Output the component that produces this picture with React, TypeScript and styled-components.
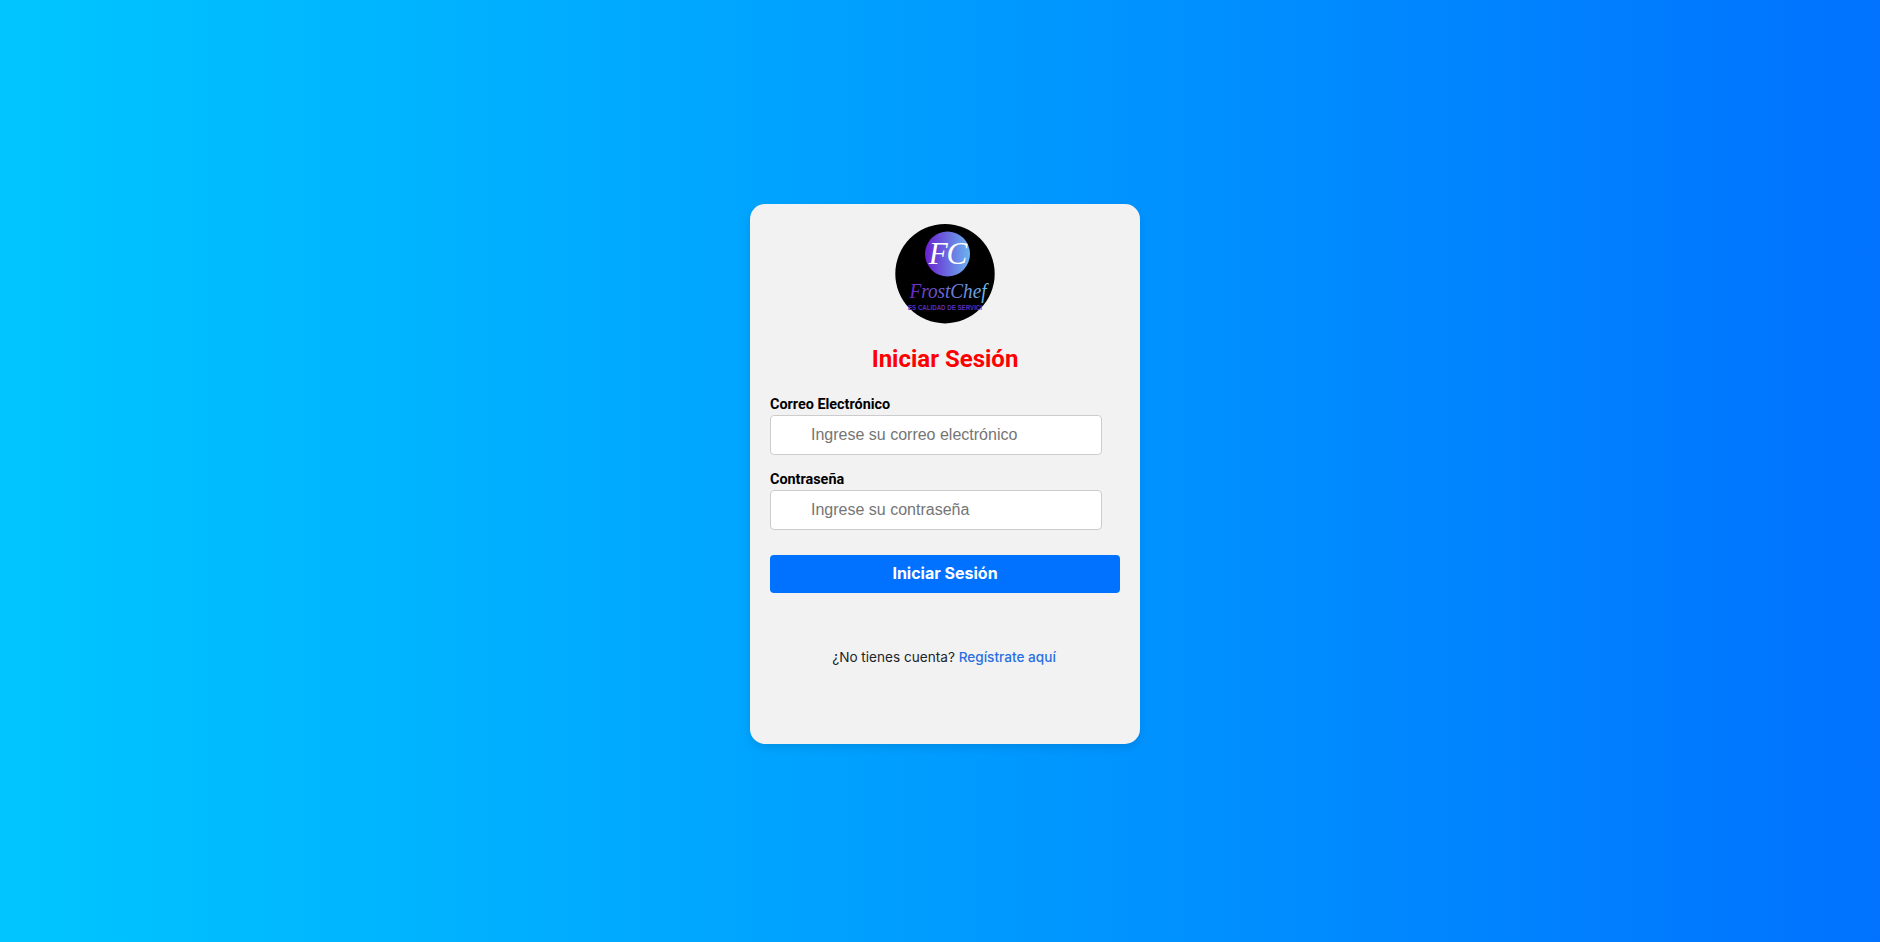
import React from "react";
import styled, { createGlobalStyle } from "styled-components";

const Global = createGlobalStyle`
  html, body { margin: 0; padding: 0; height: 100%; }
  * { box-sizing: border-box; }
  body { font-family: Roboto, "Liberation Sans", sans-serif; }
`;

const Page = styled.main`
  height: 942px;
  display: flex;
  align-items: center;
  justify-content: center;
  padding-left: 10px;
  background: linear-gradient(90deg, #00c6ff 0%, #0072ff 100%);
`;

const Card = styled.section`
  width: 390px;
  height: 540px;
  padding: 20px;
  margin-top: 6px;
  display: flex;
  flex-direction: column;
  background: #f2f2f2;
  border-radius: 15px;
  box-shadow: 0 4px 10px rgba(0, 0, 0, 0.1);
`;

const LogoWrap = styled.div`
  display: flex;
  justify-content: center;
  height: 100px;
`;

const Title = styled.h2`
  margin: 20px 0 0;
  height: 30px;
  font-size: 24px;
  line-height: 30px;
  font-weight: 700;
  color: #f00;
  text-align: center;
`;

const Form = styled.form`
  display: flex;
  flex-direction: column;
  margin-top: 22px;
`;

const Field = styled.div`
  display: flex;
  flex-direction: column;
  margin-bottom: 16px;
`;

const Label = styled.label`
  font-size: 14.4px;
  line-height: 17px;
  font-weight: 700;
  color: #000;
  margin-bottom: 2px;
`;

const Input = styled.input`
  width: 332px;
  height: 40px;
  padding: 0 10px 0 40px;
  font-family: "Liberation Sans", Arial, sans-serif;
  font-size: 16px;
  color: #222;
  background: #fff;
  border: 1px solid #ccc;
  border-radius: 4px;
  outline: none;
  &::placeholder { color: #757575; opacity: 1; }
`;

const Submit = styled.button`
  width: 350px;
  height: 38px;
  margin-top: 9px;
  padding: 0 0 2px;
  font-family: Inter, Roboto, sans-serif;
  font-size: 16px;
  font-weight: 700;
  color: #fff;
  background: #0072ff;
  border: none;
  border-radius: 4px;
`;

const Footer = styled.p`
  margin: 56px 0 0;
  padding-right: 2px;
  font-family: Inter, Roboto, sans-serif;
  font-size: 13.6px;
  line-height: 17px;
  color: #212529;
  text-align: center;
`;

const FooterLink = styled.a`
  color: #2a6fe0;
  font-weight: 500;
  text-decoration: none;
`;

const Logo = () => (
  <svg width="100" height="100" viewBox="0 0 100 100" role="img" aria-label="FrostChef">
    <defs>
      <linearGradient id="disc" x1="0" x2="1" y1="0" y2="0">
        <stop offset="0" stopColor="#6a1fd0" />
        <stop offset="1" stopColor="#6bb5f0" />
      </linearGradient>
      <linearGradient id="brand" x1="0" x2="1" y1="0" y2="0">
        <stop offset="0" stopColor="#6a22c8" />
        <stop offset="1" stopColor="#6cc0ee" />
      </linearGradient>
    </defs>
    <circle cx="50" cy="49.7" r="49.7" fill="#000" />
    <circle cx="52.5" cy="30" r="22.5" fill="url(#disc)" />
    <text x="52.5" y="40" textAnchor="middle" fontFamily="'Liberation Serif', serif" fontStyle="italic" fontSize="31" letterSpacing="-1" fill="#fff">
      FC
    </text>
    <text x="53" y="74" textAnchor="middle" fontFamily="'Liberation Serif', serif" fontStyle="italic" fontSize="20" textLength="77" lengthAdjust="spacingAndGlyphs" fill="url(#brand)">
      FrostChef
    </text>
    <text x="50" y="86" textAnchor="middle" fontFamily="'Liberation Sans', sans-serif" fontWeight="700" fontSize="6.5" textLength="74" lengthAdjust="spacingAndGlyphs" fill="#5a2fb8">
      ES CALIDAD DE SERVICI
    </text>
  </svg>
);

export default function App() {
  return (
    <Page>
      <Global />
      <Card>
        <LogoWrap>
          <Logo />
        </LogoWrap>
        <Title>Iniciar Sesión</Title>
        <Form onSubmit={(e) => e.preventDefault()}>
          <Field>
            <Label htmlFor="email">Correo Electrónico</Label>
            <Input id="email" type="email" placeholder="Ingrese su correo electrónico" />
          </Field>
          <Field>
            <Label htmlFor="password">Contraseña</Label>
            <Input id="password" type="password" placeholder="Ingrese su contraseña" />
          </Field>
          <Submit type="submit">Iniciar Sesión</Submit>
        </Form>
        <Footer>
          ¿No tienes cuenta? <FooterLink href="#">Regístrate aquí</FooterLink>
        </Footer>
      </Card>
    </Page>
  );
}
